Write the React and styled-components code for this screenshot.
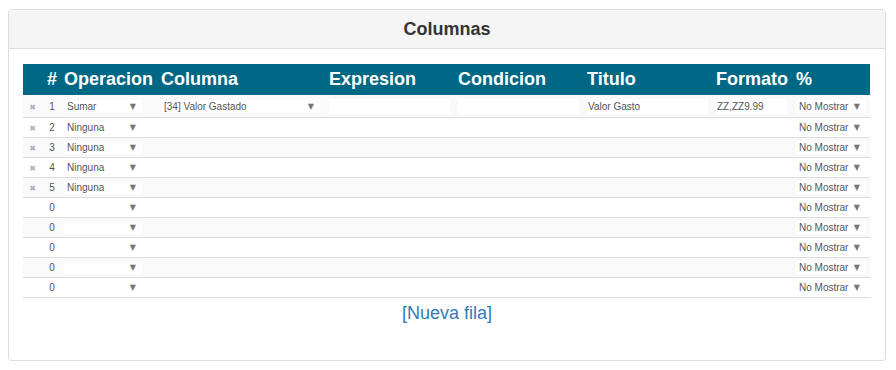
import styled, { createGlobalStyle } from 'styled-components'

const GlobalStyle = createGlobalStyle`
  body {
    margin: 0;
    background: #fff;
    font-family: "Liberation Sans", Arial, sans-serif;
    color: #333;
  }
`

//Outer bootstrap-like panel
const Panel = styled.div`
  margin: 9px 10px 0 8px;
  height: 352px;
  box-sizing: border-box;
  border: 1px solid #ddd;
  border-radius: 4px;
  box-shadow: 0 1px 1px rgba(0, 0, 0, 0.05);
  background: #fff;
`

const PanelHeading = styled.div`
  height: 39px;
  box-sizing: border-box;
  background: #f5f5f5;
  border-bottom: 1px solid #ddd;
  border-radius: 3px 3px 0 0;
  display: flex;
  align-items: center;
  justify-content: center;
  font-size: 18px;
  font-weight: bold;
  color: #333;
`

const PanelBody = styled.div`
  padding: 15px 14px 0 14px;
`

const Grid = styled.table`
  width: 847px;
  table-layout: fixed;
  border-collapse: collapse;
  border-spacing: 0;
`

const HeadCell = styled.th`
  background: #006885;
  color: #fff;
  font-size: 18px;
  font-weight: bold;
  height: 31px;
  padding: 0 2px;
  text-align: ${props => props.$center ? 'center' : 'left'};
  white-space: nowrap;
  vertical-align: middle;
`

const Row = styled.tr`
  background: ${props => props.$striped ? '#f9f9f9' : '#fff'};
  border-bottom: 1px solid #ddd;

  td {
    height: ${props => props.$tall ? '22px' : '19px'};
  }
`

const Cell = styled.td`
  padding: 0 2px;
  font-size: 10px;
  color: #555;
  vertical-align: middle;
  text-align: ${props => props.$center ? 'center' : 'left'};
  white-space: nowrap;
`

const Remove = styled.span`
  color: #a9b0c4;
  font-family: "DejaVu Sans", sans-serif;
  font-size: 8px;
`

const SelectBox = styled.div`
  width: ${props => props.$w}px;
  height: 13px;
  box-sizing: border-box;
  background: #fff;
  display: flex;
  align-items: center;
  justify-content: space-between;
  padding: 0 6px 0 3px;
  font-size: 10px;
  color: #555;
`

const Arrow = styled.span`
  font-family: "DejaVu Sans", sans-serif;
  font-size: 8px;
  color: #777;
`

const TextBox = styled.input`
  width: ${props => props.$w}px;
  height: 15px;
  box-sizing: border-box;
  border: none;
  background: #fff;
  padding: 0 1px;
  margin: 1px 0 0 0;
  font-family: "Liberation Sans", Arial, sans-serif;
  font-size: 10px;
  color: #555;
  outline: none;
  display: block;
`

const NewRow = styled.div`
  text-align: center;
  margin-top: 5px;
  font-size: 18px;

  a {
    color: #337ab7;
    text-decoration: none;
  }
`

const Select = ({ w, value }) => (
  <SelectBox $w={w}>
    <span>{value}</span>
    <Arrow>▼</Arrow>
  </SelectBox>
)

const columns = [
  { label: '', w: 19 },
  { label: '#', w: 20, center: true },
  { label: 'Operacion', w: 97 },
  { label: 'Columna', w: 168 },
  { label: 'Expresion', w: 129 },
  { label: 'Condicion', w: 129 },
  { label: 'Titulo', w: 129 },
  { label: 'Formato', w: 80 },
  { label: '%', w: 76 },
]

const rows = [
  { n: 1, op: 'Sumar', col: '[34] Valor Gastado', titulo: 'Valor Gasto', formato: 'ZZ,ZZ9.99', removable: true },
  { n: 2, op: 'Ninguna', removable: true },
  { n: 3, op: 'Ninguna', removable: true },
  { n: 4, op: 'Ninguna', removable: true },
  { n: 5, op: 'Ninguna', removable: true },
  { n: 0, op: '' },
  { n: 0, op: '' },
  { n: 0, op: '' },
  { n: 0, op: '' },
  { n: 0, op: '' },
]

const App = () => {
  return (
    <>
      <GlobalStyle />
      <Panel>
        <PanelHeading>Columnas</PanelHeading>
        <PanelBody>
          <Grid>
            <colgroup>
              {columns.map((c, i) => <col key={i} style={{ width: c.w }} />)}
            </colgroup>
            <thead>
              <tr>
                {columns.map((c, i) =>
                  <HeadCell key={i} $center={c.center}>{c.label}</HeadCell>)}
              </tr>
            </thead>
            <tbody>
              {rows.map((r, i) => {
                const full = !!r.col
                return (
                  <Row key={i} $striped={i % 2 === 0} $tall={full}>
                    <Cell $center>{r.removable ? <Remove>✖</Remove> : null}</Cell>
                    <Cell $center>{r.n}</Cell>
                    <Cell><Select w={78} value={r.op} /></Cell>
                    <Cell>{full ? <Select w={159} value={r.col} /> : null}</Cell>
                    <Cell>{full ? <TextBox $w={121} readOnly value='' /> : null}</Cell>
                    <Cell>{full ? <TextBox $w={121} readOnly value='' /> : null}</Cell>
                    <Cell>{full ? <TextBox $w={121} readOnly value={r.titulo} /> : null}</Cell>
                    <Cell>{full ? <TextBox $w={71} readOnly value={r.formato} /> : null}</Cell>
                    <Cell><Select w={70} value='No Mostrar' /></Cell>
                  </Row>
                )
              })}
            </tbody>
          </Grid>
          <NewRow><a href='#'>[Nueva fila]</a></NewRow>
        </PanelBody>
      </Panel>
    </>
  )
}

export default App
